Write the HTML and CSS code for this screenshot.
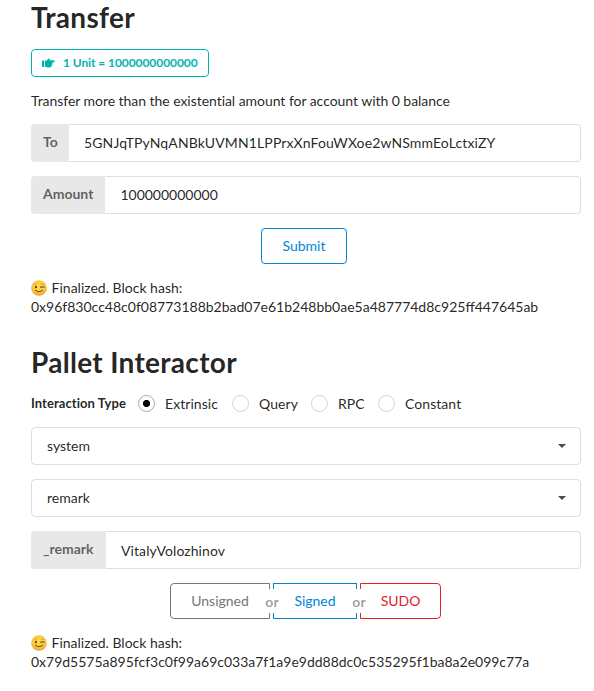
FILE: index.html
```html
<!DOCTYPE html>
<html lang="en">
<head>
<meta charset="utf-8">
<title>Transfer</title>
<link rel="stylesheet" href="styles.css">
</head>
<body>
<svg class="defs" width="0" height="0" aria-hidden="true">
  <defs>
    <radialGradient id="face" cx=".5" cy=".4" r=".6">
      <stop offset="0" stop-color="#ffdc48"/>
      <stop offset=".65" stop-color="#fcc83c"/>
      <stop offset="1" stop-color="#f09a3c"/>
    </radialGradient>
    <symbol id="wink" viewBox="0 0 16 16">
      <circle cx="8" cy="8" r="7.8" fill="url(#face)"/>
      <ellipse cx="5" cy="7" rx="1" ry="1.300" fill="#4e3b2f"/>
      <path d="M9.600 7.300q1.700-1.200 3.400 0M4.600 10.400q3.400 2.600 6.800 0" fill="none" stroke="#5b432d" stroke-width="1.100" stroke-linecap="round"/>
      <path d="M3.500 4.500q1-1 2.200-.8M10 4.200q1.400-.6 2.700.3" fill="none" stroke="#c98a30" stroke-width=".6" stroke-linecap="round"/>
    </symbol>
  </defs>
</svg>
<main class="page">
  <section class="transfer">
    <h1>Transfer</h1>
    <div class="label">
      <svg class="hand" viewBox="0 0 13 11" width="13" height="11"><path d="M0 2.500h2v6.500H0zM2.800 2.500h1.500C5.300 2.300 5.900.8 6.900.4 7.900.2 8.200 1.300 7.400 2.200H11.700Q12.600 2.300 12.600 3.400T11.700 4.600H10.200Q10.700 5.200 10.200 6 10.400 7 9.700 7.600 9.600 9.300 7.900 9.500H5.500C4.300 9.500 3.700 8.800 2.800 8.800z" fill="currentColor"/></svg>
      <span>1 Unit = 1000000000000</span>
    </div>
    <p class="hint">Transfer more than the existential amount for account with 0 balance</p>
    <div class="field to"><span class="tag">To</span><span class="value">5GNJqTPyNqANBkUVMN1LPPrxXnFouWXoe2wNSmmEoLctxiZY</span></div>
    <div class="field"><span class="tag">Amount</span><span class="value">100000000000</span></div>
    <div class="actions"><button class="btn blue submit">Submit</button></div>
    <div class="status"><svg class="emoji"><use href="#wink"/></svg> Finalized. Block hash:<br>0x96f830cc48c0f08773188b2bad07e61b248bb0ae5a487774d8c925ff447645ab</div>
  </section>
  <section class="interactor">
    <h1>Pallet Interactor</h1>
    <div class="types">
      <b>Interaction Type</b>
      <span class="radio on extrinsic">Extrinsic</span>
      <span class="radio query">Query</span>
      <span class="radio rpc">RPC</span>
      <span class="radio">Constant</span>
    </div>
    <div class="dropdown"><span>system</span><i></i></div>
    <div class="dropdown"><span>remark</span><i></i></div>
    <div class="field argument"><span class="tag">_remark</span><span class="value">VitalyVolozhinov</span></div>
    <div class="actions group">
      <button class="btn grey">Unsigned</button>
      <div class="or"><span>or</span></div>
      <button class="btn blue">Signed</button>
      <div class="or"><span>or</span></div>
      <button class="btn red">SUDO</button>
    </div>
    <div class="status call"><svg class="emoji"><use href="#wink"/></svg> Finalized. Block hash:<br>0x79d5575a895fcf3c0f99a69c033a7f1a9e9dd88dc0c535295f1ba8a2e099c77a</div>
  </section>
</main>
</body>
</html>
```
FILE: styles.css
```css
* { box-sizing: border-box; }
body {
  margin: 0;
  background: #fff;
  color: rgba(0, 0, 0, .87);
  font: 14px/20px Lato, "Liberation Sans", sans-serif;
}
.defs { position: absolute; }
.page { width: 550px; margin-left: 31px; }
h1 {
  margin: 0;
  font-size: 28px;
  line-height: 34px;
  font-weight: 700;
  letter-spacing: .3px;
}
.label {
  display: flex;
  align-items: center;
  width: 178px;
  height: 28px;
  margin-top: 15px;
  padding-left: 10px;
  border: 1px solid #00b5ad;
  border-radius: 4px;
  color: #00b5ad;
  font-size: 12px;
  font-weight: 700;
  line-height: 12px;
  letter-spacing: -.07px;
  white-space: nowrap;
}
.hand { margin-right: 8px; }
.hint { margin: 14px 0 13px; letter-spacing: -.045px; }
.field {
  display: flex;
  height: 38px;
  margin-bottom: 14px;
}
.tag {
  padding: 8px 12px 0;
  background: #e8e8e8;
  border-radius: 4px 0 0 4px;
  color: rgba(0, 0, 0, .6);
  font-weight: 700;
}
.to .tag { width: 38px; }
.to .value { letter-spacing: .125px; }
.argument .tag { width: 75px; }
.argument .value { padding-top: 9px; letter-spacing: .08px; }
.value {
  flex: 1;
  padding: 8px 14px 0;
  border: 1px solid rgba(34, 36, 38, .15);
  border-left-color: transparent;
  border-radius: 0 4px 4px 0;
}
.actions { display: flex; justify-content: center; height: 36px; }
.btn {
  height: 36px;
  padding: 0 20px;
  border: 1px solid currentColor;
  border-radius: 4px;
  background: #fff;
  font: 14px/14px Lato, "Liberation Sans", sans-serif;
}
.submit { width: 86px; margin-right: 4px; }
.blue { color: #0085d0; }
.grey { color: #767676; }
.red { color: #e0202a; }
.status { margin-top: 14px; line-height: 19px; white-space: nowrap; }
.call { letter-spacing: -.01px; }
.emoji { width: 16px; height: 16px; margin-right: 1px; vertical-align: -3px; }
.interactor h1 { margin-top: 29px; }
.types {
  display: flex;
  height: 20px;
  margin: 15px 0 13px;
}
.types b {
  width: 107px;
  font-size: 13px;
  line-height: 18px;
  letter-spacing: .06px;
}
.radio { display: flex; letter-spacing: .06px; }
.radio::before {
  content: "";
  width: 15px;
  height: 15px;
  margin: 1px 10px 0 0;
  border: 1px solid #d4d4d5;
  border-radius: 50%;
}
.on::before {
  border-color: #aaa;
  background: radial-gradient(circle, #000 3.200px, transparent 3.900px);
}
.extrinsic { width: 94px; }
.query { width: 79px; }
.rpc { width: 67px; }
.dropdown {
  display: flex;
  justify-content: space-between;
  height: 38px;
  margin-bottom: 14px;
  padding: 8px 14px 0 15px;
  border: 1px solid rgba(34, 36, 38, .15);
  border-radius: 4px;
}
.dropdown i {
  width: 8px;
  height: 4px;
  margin-top: 8px;
  background: #4c4c4d;
  clip-path: polygon(0 0, 100% 0, 50% 100%);
}
.group { padding-right: 2px; }
.group .btn { padding: 0 0 0 1px; }
.group .grey { width: 100px; border-radius: 4px 0 0 4px; }
.group .blue { width: 84px; border-radius: 0; }
.group .red { width: 81px; border-radius: 0 4px 4px 0; }
.or { position: relative; width: 3px; }
.or span {
  position: absolute;
  top: 6px;
  left: -10px;
  width: 25px;
  height: 24px;
  background: #fff;
  color: rgba(0, 0, 0, .4);
  font-weight: 700;
  line-height: 25px;
  text-align: center;
}
```
